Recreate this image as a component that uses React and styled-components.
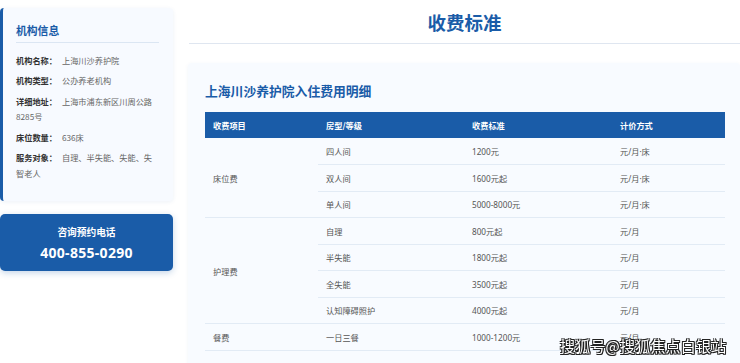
import React from 'react'
import styled, { createGlobalStyle } from 'styled-components';

const GlobalStyle = createGlobalStyle`
    body {
        margin: 0;
        background: #fff;
        font-family: "Noto Sans CJK SC", "Noto Sans", sans-serif;
        overflow: hidden;
    }
`;

const blue = '#1a5ca8';

const Page = styled.div`
    display: flex;
    gap: 16px;
    align-items: flex-start;
`;

const Sidebar = styled.aside`
    flex: 0 0 173px;
    padding-top: 8px;
`;

const InfoCard = styled.section`
    background: #f7faff;
    border-left: 3px solid ${blue};
    border-radius: 4px;
    padding: 15px 14px 15px 13px;
    box-shadow: 0 1px 4px rgba(30, 80, 150, 0.08);
`;

const CardTitle = styled.h3`
    margin: 0 0 9.5px;
    font-size: 10.8px;
    line-height: 15px;
    font-weight: 700;
    color: ${blue};
    padding: 0 0 4px;
    border-bottom: 1px solid #dbe6f3;
`;

const InfoRow = styled.p`
    margin: 0 0 5px;
    font-size: 8.2px;
    line-height: 15.5px;
    color: #666;
`;

const Label = styled.strong`
    color: #333;
    font-weight: 700;
    margin-right: 5px;
`;

const PhoneCard = styled.div`
    margin-top: 13px;
    height: 57px;
    box-sizing: border-box;
    padding-top: 12px;
    background: ${blue};
    border-radius: 5px;
    text-align: center;
    color: #fff;
    box-shadow: 0 2px 6px rgba(26, 92, 168, 0.25);
`;

const PhoneLabel = styled.div`
    font-size: 9.7px;
    line-height: 13px;
    font-weight: 700;
`;

const PhoneNumber = styled.div`
    margin-top: 4.5px;
    font-family: "Noto Sans", sans-serif;
    font-size: 14px;
    line-height: 18px;
    font-weight: 700;
    letter-spacing: 0.3px;
`;

const Main = styled.main`
    flex: 1;
    min-width: 0;
`;

const PageTitle = styled.h1`
    margin: 0;
    padding: 9px 0 8px;
    font-size: 18.5px;
    line-height: 26px;
    font-weight: 700;
    color: ${blue};
    text-align: center;
    border-bottom: 1px solid #dfe6f0;
`;

const Panel = styled.section`
    margin: 19px 0 0 -1px;
    padding: 19px 16px 24px 17px;
    background: #f8fbff;
    border-radius: 4px;
    box-shadow: 0 1px 4px rgba(30, 80, 150, 0.06);
`;

const PanelTitle = styled.h2`
    margin: 0 0 12px;
    font-size: 12.8px;
    line-height: 18px;
    font-weight: 700;
    color: ${blue};
`;

const Table = styled.table`
    width: 520px;
    border-collapse: collapse;
    table-layout: fixed;
    font-family: "Noto Sans", "Noto Sans CJK SC", sans-serif;
    font-size: 8.2px;
`;

const Th = styled.th`
    box-sizing: border-box;
    width: ${p => p.$w}px;
    height: 26px;
    padding: 0 8px;
    background: ${blue};
    color: #fff;
    font-family: "Noto Sans CJK SC", sans-serif;
    font-weight: 700;
    text-align: left;
`;

const Tr = styled.tr`
    height: 26.5px;
`;

const Td = styled.td`
    padding: 0 8px;
    color: #555;
    vertical-align: middle;
    border-bottom: 1px solid #e2ebf5;
`;

const Watermark = styled.div`
    position: fixed;
    left: 560px;
    top: 336px;
    font-size: 15px;
    line-height: 20px;
    color: #fff;
    letter-spacing: 0.2px;
    text-shadow: 1px 1px 0 #222, -1px -1px 0 #222, 1px -1px 0 #222, -1px 1px 0 #222, 0 1px 0 #222, 1px 0 0 #222;
`;

const info = [
    ['机构名称：', '上海川沙养护院'],
    ['机构类型：', '公办养老机构'],
    ['详细地址：', '上海市浦东新区川周公路8285号'],
    ['床位数量：', '636床'],
    ['服务对象：', '自理、半失能、失能、失智老人'],
];

const columns = [
    ['收费项目', 113],
    ['房型/等级', 146],
    ['收费标准', 148],
    ['计价方式', 113],
];

const groups = [
    {
        name: '床位费',
        rows: [
            ['四人间', '1200元', '元/月·床'],
            ['双人间', '1600元起', '元/月·床'],
            ['单人间', '5000-8000元', '元/月·床'],
        ],
    },
    {
        name: '护理费',
        rows: [
            ['自理', '800元起', '元/月'],
            ['半失能', '1800元起', '元/月'],
            ['全失能', '3500元起', '元/月'],
            ['认知障碍照护', '4000元起', '元/月'],
        ],
    },
    {
        name: '餐费',
        rows: [
            ['一日三餐', '1000-1200元', '元/月'],
        ],
    },
];

const App = () => {
    return (
        <>
            <GlobalStyle />
            <Page>
                <Sidebar>
                    <InfoCard>
                        <CardTitle>机构信息</CardTitle>
                        {info.map(([label, value]) => (
                            <InfoRow key={label}>
                                <Label>{label}</Label>{value}
                            </InfoRow>
                        ))}
                    </InfoCard>
                    <PhoneCard>
                        <PhoneLabel>咨询预约电话</PhoneLabel>
                        <PhoneNumber>400-855-0290</PhoneNumber>
                    </PhoneCard>
                </Sidebar>

                <Main>
                    <PageTitle>收费标准</PageTitle>
                    <Panel>
                        <PanelTitle>上海川沙养护院入住费用明细</PanelTitle>
                        <Table>
                            <thead>
                                <tr>
                                    {columns.map(([title, w]) => (
                                        <Th key={title} $w={w}>{title}</Th>
                                    ))}
                                </tr>
                            </thead>
                            <tbody>
                                {groups.map(group =>
                                    group.rows.map((row, i) => (
                                        <Tr key={group.name + row[0]}>
                                            {i === 0 && <Td rowSpan={group.rows.length}>{group.name}</Td>}
                                            {row.map(cell => <Td key={cell}>{cell}</Td>)}
                                        </Tr>
                                    ))
                                )}
                            </tbody>
                        </Table>
                    </Panel>
                </Main>
            </Page>
            <Watermark>搜狐号@搜狐焦点白银站</Watermark>
        </>
    );
}

export default App;
